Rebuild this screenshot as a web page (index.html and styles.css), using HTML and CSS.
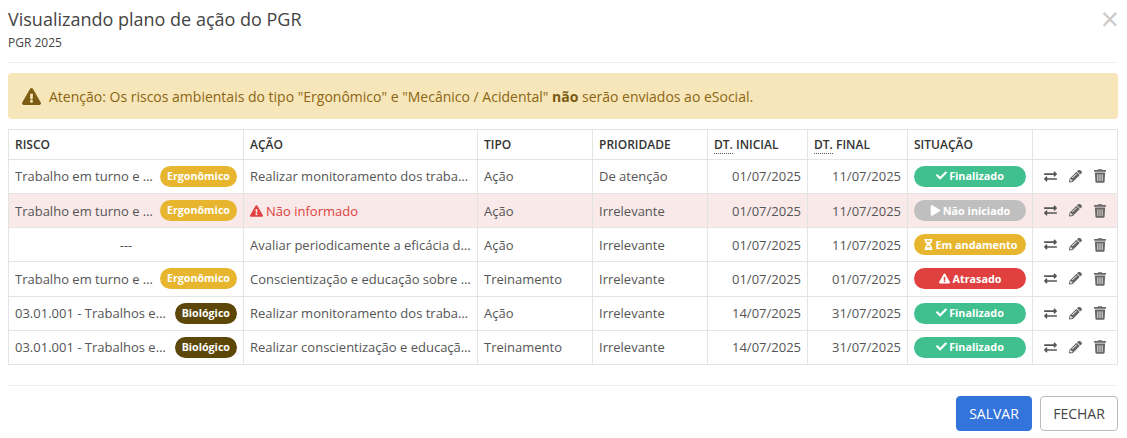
FILE: index.html
```html
<!DOCTYPE html>
<html lang="pt-BR">
<head>
    <meta charset="UTF-8">
    <meta name="viewport" content="width=device-width, initial-scale=1.0">
    <title>Visualizando plano de ação do PGR</title>
    <link rel="stylesheet" href="styles.css">
</head>
<body>
    <svg class="icon-defs" width="0" height="0">
        <symbol id="i-warn" viewBox="0 0 576 512"><path d="M569.5 440 329.6 24c-18.400-32-64.700-32-83.200 0L6.500 440c-18.400 31.900 4.600 72 41.600 72h479.800c36.900 0 60-40 41.600-72zM288 354c-25.400 0-46 20.600-46 46s20.600 46 46 46 46-20.600 46-46-20.600-46-46-46zm-43.700-165.400 7.400 136c.3 6.400 5.600 11.400 12 11.400h48.500c6.400 0 11.600-5 12-11.400l7.400-136c.4-6.900-5.100-12.600-12-12.600h-63.800c-6.900 0-12.400 5.700-12 12.600z" fill-rule="evenodd"/></symbol>
        <symbol id="i-check" viewBox="0 0 512 512"><path d="M174 439 7 273c-10-10-10-26 0-36l36-36c10-10 26-10 36 0l113 112L433 73c10-10 26-10 36 0l36 36c10 10 10 26 0 36L210 439c-10 10-26 10-36 0z"/></symbol>
        <symbol id="i-play" viewBox="0 0 448 512"><path d="M424 222 72 14C43-3 0 13 0 56v400c0 38 42 61 72 42l352-208c32-18 32-50 0-68z"/></symbol>
        <symbol id="i-hourglass" viewBox="0 0 384 512"><path d="M360 0H24C11 0 0 11 0 24v16c0 13 11 24 24 24 0 91 51 168 121 192-70 24-121 101-121 192-13 0-24 11-24 24v16c0 13 11 24 24 24h336c13 0 24-11 24-24v-16c0-13-11-24-24-24 0-91-51-168-121-192 70-24 121-101 121-192 13 0 24-11 24-24V24c0-13-11-24-24-24zM276 384H108c17-47 49-80 84-80s67 33 84 80zm0-256H108c-7-19-12-41-12-64h192c0 23-5 45-12 64z"/></symbol>
        <symbol id="i-swap" viewBox="0 0 512 512"><path d="M0 168v-16c0-13 11-24 24-24h360V80c0-21 26-32 41-17l80 80c9 9 9 25 0 34l-80 80c-15 15-41 4-41-17v-48H24c-13 0-24-11-24-24zm488 152H128v-48c0-21-26-32-41-17L7 335c-9 9-9 25 0 34l80 80c15 15 41 4 41-17v-48h360c13 0 24-11 24-24v-16c0-13-11-24-24-24z"/></symbol>
        <symbol id="i-pencil" viewBox="0 0 512 512"><path d="M497 125l-46 46c-5 5-12 5-17 0L323 60c-5-5-5-12 0-17l46-46c19-19 49-19 68 0l60 60c19 19 19 49 0 68zM285 78 22 341 1 463c-3 16 12 31 28 28l122-21 263-263c5-5 5-12 0-17L302 78c-5-5-12-5-17 0zM125 318c-6-6-6-15 0-21l154-154c6-6 15-6 21 0s6 15 0 21L146 318c-6 6-15 6-21 0zm-36 84h48v36l-65 11-31-31 11-65h37v49z"/></symbol>
        <symbol id="i-trash" viewBox="0 0 448 512"><path d="M432 32H312l-9-19c-4-8-12-13-21-13H166c-9 0-17 5-21 13l-9 19H16C7 32 0 39 0 48v32c0 9 7 16 16 16h416c9 0 16-7 16-16V48c0-9-7-16-16-16zM53 467c2 25 23 45 48 45h246c25 0 46-20 48-45l21-339H32l21 339zM144 192c9 0 16 7 16 16v224c0 9-7 16-16 16s-16-7-16-16V208c0-9 7-16 16-16zm80 0c9 0 16 7 16 16v224c0 9-7 16-16 16s-16-7-16-16V208c0-9 7-16 16-16zm80 0c9 0 16 7 16 16v224c0 9-7 16-16 16s-16-7-16-16V208c0-9 7-16 16-16z"/></symbol>
    </svg>

    <div class="modal">
        <header class="modal-header">
            <div>
                <h1>Visualizando plano de ação do PGR</h1>
                <p>PGR 2025</p>
            </div>
            <button class="close-button">&times;</button>
        </header>

        <div class="alert">
            <svg class="alert-icon"><use href="#i-warn"/></svg>
            <span>Atenção: Os riscos ambientais do tipo "Ergonômico" e "Mecânico / Acidental" <b>não</b> serão enviados ao eSocial.</span>
        </div>

        <table class="plan-table">
            <colgroup>
                <col class="col-risco"><col class="col-acao"><col class="col-tipo"><col class="col-prioridade">
                <col class="col-data"><col class="col-data"><col class="col-situacao"><col>
            </colgroup>
            <thead>
                <tr>
                    <th>RISCO</th>
                    <th>AÇÃO</th>
                    <th>TIPO</th>
                    <th>PRIORIDADE</th>
                    <th><abbr>DT.</abbr> INICIAL</th>
                    <th><abbr>DT.</abbr> FINAL</th>
                    <th>SITUAÇÃO</th>
                    <th></th>
                </tr>
            </thead>
            <tbody>
                <tr>
                    <td><div class="risk"><span class="risk-name">Trabalho em turno e noturno</span><span class="tag tag-ergo">Ergonômico</span></div></td>
                    <td><div class="cut">Realizar monitoramento dos trabalhadores</div></td>
                    <td>Ação</td>
                    <td>De atenção</td>
                    <td class="date">01/07/2025</td>
                    <td class="date">11/07/2025</td>
                    <td><span class="status st-done"><svg><use href="#i-check"/></svg>Finalizado</span></td>
                    <td class="tools"><svg class="t-swap"><use href="#i-swap"/></svg><svg class="t-pencil"><use href="#i-pencil"/></svg><svg class="t-trash"><use href="#i-trash"/></svg></td>
                </tr>
                <tr class="row-error">
                    <td><div class="risk"><span class="risk-name">Trabalho em turno e noturno</span><span class="tag tag-ergo">Ergonômico</span></div></td>
                    <td class="missing"><svg><use href="#i-warn"/></svg>Não informado</td>
                    <td>Ação</td>
                    <td>Irrelevante</td>
                    <td class="date">01/07/2025</td>
                    <td class="date">11/07/2025</td>
                    <td><span class="status st-idle"><svg><use href="#i-play"/></svg>Não iniciado</span></td>
                    <td class="tools"><svg class="t-swap"><use href="#i-swap"/></svg><svg class="t-pencil"><use href="#i-pencil"/></svg><svg class="t-trash"><use href="#i-trash"/></svg></td>
                </tr>
                <tr>
                    <td class="empty">---</td>
                    <td><div class="cut">Avaliar periodicamente a eficácia das medidas</div></td>
                    <td>Ação</td>
                    <td>Irrelevante</td>
                    <td class="date">01/07/2025</td>
                    <td class="date">11/07/2025</td>
                    <td><span class="status st-doing"><svg><use href="#i-hourglass"/></svg>Em andamento</span></td>
                    <td class="tools"><svg class="t-swap"><use href="#i-swap"/></svg><svg class="t-pencil"><use href="#i-pencil"/></svg><svg class="t-trash"><use href="#i-trash"/></svg></td>
                </tr>
                <tr>
                    <td><div class="risk"><span class="risk-name">Trabalho em turno e noturno</span><span class="tag tag-ergo">Ergonômico</span></div></td>
                    <td><div class="cut">Conscientização e educação sobre os riscos</div></td>
                    <td>Treinamento</td>
                    <td>Irrelevante</td>
                    <td class="date">01/07/2025</td>
                    <td class="date">01/07/2025</td>
                    <td><span class="status st-late"><svg><use href="#i-warn"/></svg>Atrasado</span></td>
                    <td class="tools"><svg class="t-swap"><use href="#i-swap"/></svg><svg class="t-pencil"><use href="#i-pencil"/></svg><svg class="t-trash"><use href="#i-trash"/></svg></td>
                </tr>
                <tr>
                    <td><div class="risk"><span class="risk-name">03.01.001 - Trabalhos em estabelecimentos</span><span class="tag tag-bio">Biológico</span></div></td>
                    <td><div class="cut">Realizar monitoramento dos trabalhadores</div></td>
                    <td>Ação</td>
                    <td>Irrelevante</td>
                    <td class="date">14/07/2025</td>
                    <td class="date">31/07/2025</td>
                    <td><span class="status st-done"><svg><use href="#i-check"/></svg>Finalizado</span></td>
                    <td class="tools"><svg class="t-swap"><use href="#i-swap"/></svg><svg class="t-pencil"><use href="#i-pencil"/></svg><svg class="t-trash"><use href="#i-trash"/></svg></td>
                </tr>
                <tr>
                    <td><div class="risk"><span class="risk-name">03.01.001 - Trabalhos em estabelecimentos</span><span class="tag tag-bio">Biológico</span></div></td>
                    <td><div class="cut">Realizar conscientização e educação dos trabalhadores</div></td>
                    <td>Treinamento</td>
                    <td>Irrelevante</td>
                    <td class="date">14/07/2025</td>
                    <td class="date">31/07/2025</td>
                    <td><span class="status st-done"><svg><use href="#i-check"/></svg>Finalizado</span></td>
                    <td class="tools"><svg class="t-swap"><use href="#i-swap"/></svg><svg class="t-pencil"><use href="#i-pencil"/></svg><svg class="t-trash"><use href="#i-trash"/></svg></td>
                </tr>
            </tbody>
        </table>

        <footer class="modal-footer">
            <button class="btn btn-primary">SALVAR</button>
            <button class="btn btn-outline">FECHAR</button>
        </footer>
    </div>
</body>
</html>
```

FILE: styles.css
```css
body {
    font-family: "Open Sans", sans-serif;
    font-size: 13px;
    margin: 0;
    padding: 0;
    background-color: #fff;
    color: #555;
    overflow: hidden;
}
.icon-defs {
    position: absolute;
}
.modal {
    padding: 0 9px 0 8px;
}
.modal-header {
    display: flex;
    justify-content: space-between;
    height: 62px;
    border-bottom: 1px solid #f0f0f0;
}
.modal-header h1 {
    margin: 7px 0 0;
    font-size: 18px;
    line-height: 24px;
    font-weight: 400;
    color: #444;
}
.modal-header p {
    margin: 4px 0 0;
    font-size: 12px;
    line-height: 16px;
    color: #444;
}
.close-button {
    border: none;
    background: none;
    padding: 0;
    height: 32px;
    margin: 3px -1px 0 0;
    font-family: "Open Sans", sans-serif;
    font-size: 32px;
    line-height: 32px;
    font-weight: 400;
    color: #ccc;
}
.alert {
    display: flex;
    align-items: center;
    height: 46px;
    margin-top: 10px;
    padding: 0 14px;
    background-color: #f7e6b9;
    border-radius: 4px;
    font-size: 14px;
    color: #8a6514;
}
.alert b {
    color: #7a5a12;
}
.alert-icon {
    width: 19px;
    height: 17px;
    margin-right: 8px;
    fill: #7d5d14;
}
.plan-table {
    width: 1110px;
    margin-top: 10px;
    table-layout: fixed;
    border-collapse: collapse;
}
.col-risco {
    width: 235px;
}
.col-acao {
    width: 234px;
}
.col-tipo {
    width: 115px;
}
.col-prioridade {
    width: 115px;
}
.col-data {
    width: 100px;
}
.col-situacao {
    width: 125px;
}
.plan-table th,
.plan-table td {
    border: 1px solid #e4e4e4;
    padding: 0 6px;
    white-space: nowrap;
}
.plan-table th {
    height: 28.8px;
    text-align: left;
    font-size: 12px;
    font-weight: 600;
    color: #333;
}
.plan-table td {
    height: 33.2px;
}
.plan-table abbr {
    border-bottom: 1px dotted #555;
}
.row-error td {
    background-color: #f9e9e9;
}
.risk {
    display: flex;
    align-items: center;
    gap: 7px;
}
.risk-name {
    flex: 1;
    min-width: 0;
    overflow: hidden;
    text-overflow: ellipsis;
}
.tag {
    flex-shrink: 0;
    height: 21px;
    padding: 0 7px;
    border-radius: 11px;
    font-size: 10.7px;
    font-weight: 700;
    line-height: 21px;
    color: #fff;
}
.tag-ergo {
    background-color: #e8b52f;
}
.tag-bio {
    background-color: #5c4709;
}
.cut {
    overflow: hidden;
    text-overflow: ellipsis;
}
.empty {
    text-align: center;
}
.missing {
    color: #e04040;
}
.missing svg {
    width: 13px;
    height: 12px;
    margin-right: 3px;
    vertical-align: -1px;
    fill: #e04040;
}
.date {
    text-align: right;
}
.status {
    display: flex;
    align-items: center;
    justify-content: center;
    gap: 2px;
    box-sizing: border-box;
    height: 21px;
    padding-bottom: 1px;
    border-radius: 11px;
    font-size: 10.8px;
    font-weight: 700;
    color: #fff;
}
.status svg {
    width: 11px;
    height: 11px;
    fill: #fff;
}
.st-done {
    background-color: #3fc08e;
}
.st-idle {
    background-color: #bfbfbf;
}
.st-doing {
    background-color: #e8b52f;
}
.st-late {
    background-color: #e04040;
    gap: 3px;
}
.tools {
    text-align: center;
    font-size: 0;
}
.tools svg {
    height: 13px;
    fill: #666;
    vertical-align: middle;
}
.tools .t-swap {
    width: 13px;
    fill: #555;
}
.t-pencil {
    width: 13px;
    margin: 0 12px;
}
.tools .t-trash {
    width: 12px;
    height: 14px;
}
.modal-footer {
    display: flex;
    justify-content: flex-end;
    gap: 8px;
    margin-top: 20px;
    padding-top: 10px;
    border-top: 1px solid #f0f0f0;
}
.btn {
    height: 35px;
    padding: 0 12px;
    border-radius: 4px;
    font-family: "Open Sans", sans-serif;
    font-size: 14px;
}
.btn-primary {
    width: 76px;
    background-color: #3273dc;
    border: 1px solid #3273dc;
    color: #fff;
}
.btn-outline {
    width: 78px;
    background-color: #fff;
    border: 1px solid #bbb;
    color: #444;
}
```
